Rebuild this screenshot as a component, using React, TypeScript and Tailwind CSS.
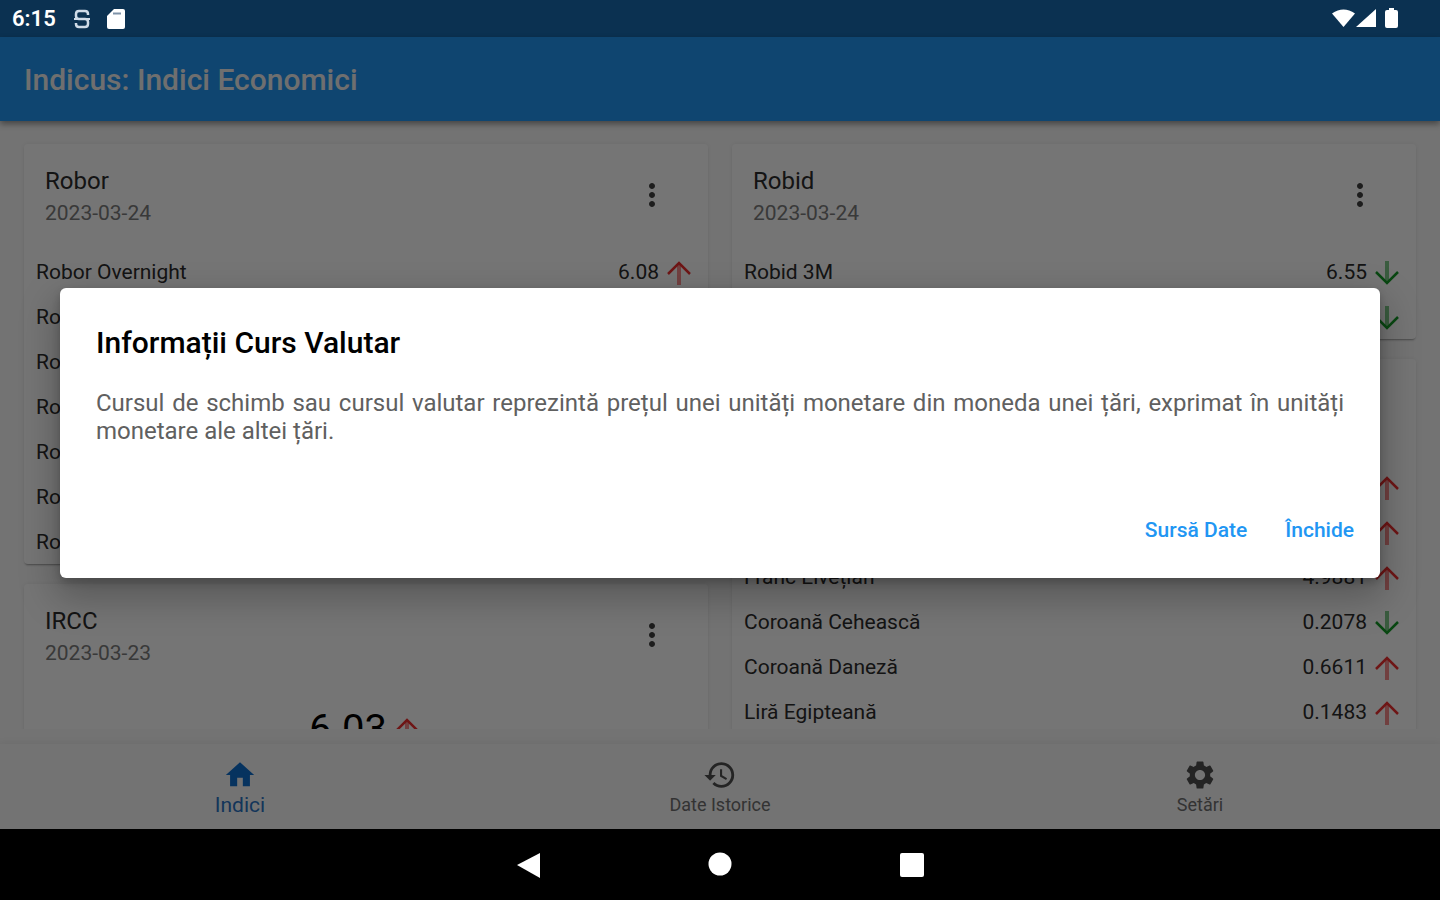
import React, { useState } from 'react';
import { MdHistory, MdHome, MdMoreVert, MdSettings } from 'react-icons/md';

type Trend = 'up' | 'down';

interface Rate {
  name: string;
  value: string;
  trend: Trend;
}

interface IndexCardProps {
  title: string;
  date: string;
  children: React.ReactNode;
}

const robor: Rate[] = [
  { name: 'Robor Overnight', value: '6.08', trend: 'up' },
  { name: 'Robor T/N', value: '6.09', trend: 'up' },
  { name: 'Robor 1S', value: '6.23', trend: 'up' },
  { name: 'Robor 1M', value: '6.54', trend: 'down' },
  { name: 'Robor 3M', value: '6.85', trend: 'down' },
  { name: 'Robor 6M', value: '7.03', trend: 'down' },
  { name: 'Robor 12M', value: '7.20', trend: 'down' },
];

const robid: Rate[] = [
  { name: 'Robid 3M', value: '6.55', trend: 'down' },
  { name: 'Robid 6M', value: '6.73', trend: 'down' },
];

const currencies: Rate[] = [
  { name: 'Euro', value: '4.9263', trend: 'up' },
  { name: 'Dolar American', value: '4.5744', trend: 'up' },
  { name: 'Franc Elvețian', value: '4.9881', trend: 'up' },
  { name: 'Coroană Cehească', value: '0.2078', trend: 'down' },
  { name: 'Coroană Daneză', value: '0.6611', trend: 'up' },
  { name: 'Liră Egipteană', value: '0.1483', trend: 'up' },
];

const tabs = [
  { label: 'Indici', icon: MdHome },
  { label: 'Date Istorice', icon: MdHistory },
  { label: 'Setări', icon: MdSettings },
];

function TrendArrow({ trend }: { trend: Trend }) {
  return (
    <svg
      viewBox="0 0 24 24"
      className={`size-6 shrink-0 ${trend === 'up' ? 'text-[#f03030]' : 'rotate-180 text-[#149c28]'}`}
      fill="none"
      stroke="currentColor"
      strokeWidth="2.5"
      aria-hidden="true"
    >
      <path d="M1 13 12 2l11 11" />
      <path d="M12 2v22" strokeWidth="4" opacity="0.55" />
    </svg>
  );
}

function IndexCard({ title, date, children }: IndexCardProps) {
  return (
    <section className="rounded-sm bg-white shadow-[0_2px_2px_-1px_rgba(0,0,0,0.35),0_0_4px_rgba(0,0,0,0.06)]">
      <header className="flex h-[106px] items-start justify-between pt-[22px] pr-[38px] pl-[21px]">
        <div>
          <h2 className="text-2xl leading-[30px] text-[#2c2c2c]">{title}</h2>
          <p className="text-[21px] leading-[34px] text-[#7c7c7c]">{date}</p>
        </div>
        <button type="button" aria-label="Opțiuni" className="mt-[11px] text-[#404040]">
          <MdMoreVert size={36} />
        </button>
      </header>
      {children}
    </section>
  );
}

function RateList({ rates }: { rates: Rate[] }) {
  return (
    <ul className="-mb-px">
      {rates.map((rate) => (
        <li key={rate.name} className="flex h-[45px] items-center pr-[17px] pl-3 text-[21px] text-[#2c2c2c]">
          <span className="flex-1">{rate.name}</span>
          <span className="mr-2">{rate.value}</span>
          <TrendArrow trend={rate.trend} />
        </li>
      ))}
    </ul>
  );
}

function StatusBar() {
  return (
    <div className="flex h-[37px] shrink-0 items-center bg-[#0b3151] pr-[38px] pl-3 text-white">
      <span className="text-[22px] font-semibold">6:15</span>
      <svg viewBox="0 0 18 20" className="ml-[17px] h-5 w-[18px]" fill="none" stroke="#cfdbe8" strokeWidth="2.5" aria-hidden="true">
        <path d="M15 6V5q0-3-3-3H6Q3 2 3 5v2q0 3 3 3h6q3 0 3 3v2q0 3-3 3H6q-3 0-3-3v-1" />
        <path d="M1 10h16" strokeWidth="2" />
      </svg>
      <svg viewBox="0 0 18 20" className="ml-4 h-5 w-[18px]" fill="currentColor" aria-hidden="true">
        <path d="M7 0h9q2 0 2 2v16q0 2-2 2H2q-2 0-2-2V7z" />
        <path d="M6 4.500h8" stroke="#7f93a8" strokeWidth="2" />
      </svg>
      <div className="flex-1" />
      <svg viewBox="0 0 70 22" className="h-[22px] w-[70px]" fill="currentColor" aria-hidden="true">
        <path d="M0 5.500Q11.500-2.500 23 5.500L11.500 19z" />
        <path d="M24 19 44 1v18z" />
        <path d="M57 0h5v2h2q2 0 2 2v14q0 2-2 2h-9q-2 0-2-2V4q0-2 2-2h2z" />
      </svg>
    </div>
  );
}

function SystemNav() {
  return (
    <div className="flex h-[71px] shrink-0 items-center justify-center gap-[156px] bg-black text-white">
      <button type="button" aria-label="Back">
        <svg viewBox="0 0 36 36" className="size-9" fill="currentColor">
          <path d="M7 18 30 6v25z" />
        </svg>
      </button>
      <button type="button" aria-label="Home">
        <svg viewBox="0 0 36 36" className="size-9" fill="currentColor">
          <circle cx="18" cy="17" r="11.500" />
        </svg>
      </button>
      <button type="button" aria-label="Recents">
        <svg viewBox="0 0 36 36" className="size-9" fill="currentColor">
          <rect x="6" y="6" width="24" height="24" rx="2" />
        </svg>
      </button>
    </div>
  );
}

function InfoDialog({ onClose }: { onClose: () => void }) {
  return (
    <div className="absolute inset-0 z-10 flex items-center bg-black/54 px-[60px]">
      <div
        role="dialog"
        aria-modal="true"
        aria-labelledby="dialog-title"
        className="w-full rounded-md bg-white shadow-[0_16px_36px_4px_rgba(0,0,0,0.25),0_4px_8px_rgba(0,0,0,0.2)]"
      >
        <div className="px-9 pt-9">
          <h2 id="dialog-title" className="text-[30px] leading-[38px] font-medium text-black">
            Informații Curs Valutar
          </h2>
          <p className="mt-[27px] text-justify text-2xl leading-7 text-[#606060]">
            Cursul de schimb sau cursul valutar reprezintă prețul unei unități monetare din moneda unei țări,
            exprimat în unități monetare ale altei țări.
          </p>
        </div>
        <div className="mt-[59px] flex justify-end gap-[14px] pr-[14px] pb-5 text-[21px] font-medium text-[#2196f3]">
          <a href="#sursa" className="flex h-[54px] items-center px-3">
            Sursă Date
          </a>
          <button type="button" onClick={onClose} className="h-[54px] px-3">
            Închide
          </button>
        </div>
      </div>
    </div>
  );
}

export default function App() {
  const [dialogOpen, setDialogOpen] = useState(true);
  const [activeTab, setActiveTab] = useState('Indici');

  return (
    <div className="flex h-screen flex-col overflow-hidden bg-[#fafafa] font-[Roboto,sans-serif]">
      <StatusBar />

      <div className="relative flex min-h-0 flex-1 flex-col">
        <header className="z-[1] flex h-[84px] shrink-0 items-center bg-[#2196f3] px-6 shadow-[0_3px_6px_rgba(0,0,0,0.4)]">
          <h1 className="text-[30px] font-medium text-[#f2f2f2]">Indicus: Indici Economici</h1>
        </header>

        <main className="mb-[15px] grid min-h-0 flex-1 grid-cols-2 items-start gap-6 overflow-hidden px-6 pt-[23px]">
          <div className="flex flex-col gap-5">
            <IndexCard title="Robor" date="2023-03-24">
              <RateList rates={robor} />
            </IndexCard>
            <IndexCard title="IRCC" date="2023-03-23">
              <div className="flex items-center justify-center gap-2 py-4 pr-1 text-[40px] leading-[48px] text-black">
                6.03
                <TrendArrow trend="up" />
              </div>
            </IndexCard>
          </div>
          <div className="flex flex-col gap-5">
            <IndexCard title="Robid" date="2023-03-24">
              <RateList rates={robid} />
            </IndexCard>
            <IndexCard title="Curs Valutar" date="2023-03-24">
              <RateList rates={currencies} />
            </IndexCard>
          </div>
        </main>

        <nav className="grid h-[85px] shrink-0 grid-cols-3 bg-[#fafafa] shadow-[0_0_8px_rgba(0,0,0,0.08)]">
          {tabs.map(({ label, icon: Icon }) => (
            <button
              key={label}
              type="button"
              onClick={() => setActiveTab(label)}
              className={`flex flex-col items-center pt-[14px] ${
                activeTab === label ? 'text-[21px] text-[#2a74c4]' : 'text-lg text-[#707070]'
              }`}
            >
              <Icon size={34} className={activeTab === label ? 'text-[#0f6fd0]' : 'text-[#505050]'} />
              <span className="leading-[26px]">{label}</span>
            </button>
          ))}
        </nav>

        {dialogOpen && <InfoDialog onClose={() => setDialogOpen(false)} />}
      </div>

      <SystemNav />
    </div>
  );
}
